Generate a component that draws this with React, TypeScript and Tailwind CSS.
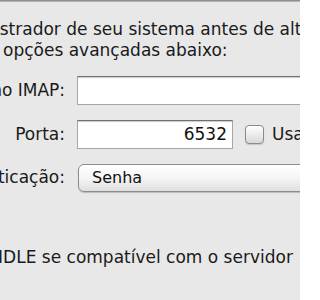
import * as React from 'react';

const font = { fontFamily: '"DejaVu Sans", "Liberation Sans", sans-serif' };

function Label({ children }: { children: React.ReactNode }) {
  return (
    <div className="flex w-[65px] shrink-0 justify-end whitespace-nowrap text-[17px] text-[#1a1a1a]">
      {children}
    </div>
  );
}

function TextField({ value, className }: { value?: string; className: string }) {
  return (
    <div
      className={`flex h-[29px] shrink-0 items-center justify-end border border-[#a6a6a6] border-t-[#707070] bg-white px-[5px] text-[17px] text-[#111] shadow-[inset_0_2px_1px_-1px_rgba(0,0,0,0.2)] ${className}`}
    >
      {value}
    </div>
  );
}

export default function App() {
  return (
    <div className="h-[300px] w-[300px] overflow-hidden bg-[#e8e8e8]" style={font}>
      <div className="h-[2px] border-t border-[#8e8e8e] bg-[#b4b4b4]" />
      <div className="mt-[17px] whitespace-nowrap text-[17px] leading-[21px] text-[#1a1a1a]">
        <div className="ml-[-154px]">Consulte o administrador de seu sistema antes de alterar as</div>
        <div className="ml-[3px]">opções avançadas abaixo:</div>
      </div>

      <div className="mt-[15px] flex flex-col gap-[15px]">
        <div className="flex items-center gap-[12px]">
          <Label>Prefixo do Caminho IMAP:</Label>
          <TextField className="w-[260px]" />
        </div>

        <div className="flex items-center gap-[12px]">
          <Label>Porta:</Label>
          <TextField value="6532" className="w-[156px]" />
          <div className="flex items-center gap-[8px] whitespace-nowrap text-[17px] text-[#1a1a1a]">
            <div className="h-[19px] w-[19px] shrink-0 rounded-[4px] border border-[#8a8a8a] bg-gradient-to-b from-[#ffffff] to-[#d8d8d8] shadow-[0_1px_1px_rgba(0,0,0,0.15)]" />
            <span>Usar SSL</span>
          </div>
        </div>

        <div className="flex items-center gap-[13px]">
          <Label>Autenticação:</Label>
          <div className="flex h-[28px] w-[260px] shrink-0 items-center rounded-l-[6px] border border-[#8c8c8c] bg-gradient-to-b from-[#ffffff] via-[#f5f5f5] to-[#e0e0e0] pl-[13px] text-[16px] text-[#111] shadow-[0_1px_1px_rgba(0,0,0,0.2)]">
            Senha
          </div>
        </div>
      </div>

      <div className="ml-[-46px] mt-[55px] whitespace-nowrap text-[17px] leading-[21px] text-[#1a1a1a]">
        Usar IDLE se compatível com o servidor
      </div>
    </div>
  );
}
